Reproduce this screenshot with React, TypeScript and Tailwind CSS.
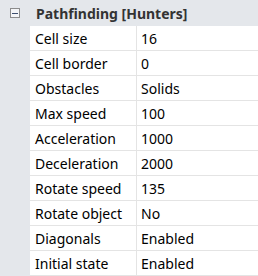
const rows: [string, string][] = [
  ['Cell size', '16'],
  ['Cell border', '0'],
  ['Obstacles', 'Solids'],
  ['Max speed', '100'],
  ['Acceleration', '1000'],
  ['Deceleration', '2000'],
  ['Rotate speed', '135'],
  ['Rotate object', 'No'],
  ['Diagonals', 'Enabled'],
  ['Initial state', 'Enabled'],
];

export default function App() {
  return (
    <div className="w-[258px] h-[276px] overflow-hidden bg-[#e4e7eb] font-['Noto_Sans',sans-serif] text-[14px]">
      <div className="h-[26px] flex items-center">
        <div className="w-[30px] flex justify-center">
          <div className="w-[10px] h-[10px] border border-[#8c8c8c] bg-[#f4f5f7] flex items-center justify-center">
            <div className="w-[6px] h-px bg-[#3d4f6e]" />
          </div>
        </div>
        <span className="ml-[6px] font-bold text-[#333333]">Pathfinding [Hunters]</span>
      </div>
      <div className="flex">
        <div className="w-[30px] shrink-0" />
        <div className="flex-1 bg-white">
          {rows.map(([k, v]) => (
            <div key={k} className="h-[25px] flex border-b border-[#e4e4e4] text-black">
              <div className="w-[107px] pl-[5px] flex items-center border-r border-[#e4e4e4]">{k}</div>
              <div className="flex-1 pl-[4px] flex items-center">{v}</div>
            </div>
          ))}
        </div>
      </div>
    </div>
  );
}
